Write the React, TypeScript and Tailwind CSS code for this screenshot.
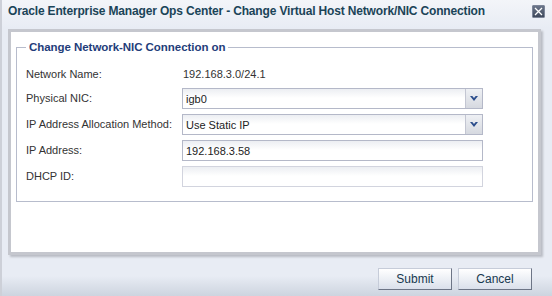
import React from "react";

const Chevron = () => (
  <svg width="8" height="5" viewBox="0 0 8 5">
    <path d="M0 0h2.3L4 2.1 5.7 0H8L4 5z" fill="#2b4d8c" />
  </svg>
);

function Select({ value }: { value: string }) {
  return (
    <div className="w-[301px] h-[21px] flex border border-[#b4b8c8] bg-[linear-gradient(to_bottom,#eceef2_0px,#ffffff_9px)]">
      <div className="flex-1 flex items-center pl-[3px] pt-[2px] text-[11px] text-[#222]">{value}</div>
      <div className="w-[17px] flex items-center justify-center border-l border-[#c3c6d2] bg-[linear-gradient(to_bottom,#eef0f4,#d6d9e0)]">
        <Chevron />
      </div>
    </div>
  );
}

function Input({ value, disabled }: { value?: string; disabled?: boolean }) {
  return (
    <div
      className={
        "w-[301px] h-[21px] flex items-center pl-[3px] pt-[2px] text-[11px] text-[#222] border bg-[linear-gradient(to_bottom,#eceef2_0px,#ffffff_9px)] " +
        (disabled ? "border-[#d2d4de]" : "border-[#b4b8c8]")
      }
    >
      {value}
    </div>
  );
}

function Row({ label, children, first }: { label: string; children: React.ReactNode; first?: boolean }) {
  return (
    <div className={"flex items-center h-[21px] " + (first ? "mb-[3px]" : "mb-[5px] last:mb-0")}>
      <div className="w-[156px] text-[11px] text-[#333]">{label}</div>
      {children}
    </div>
  );
}

function Button({ label }: { label: string }) {
  return (
    <button className="w-[74px] h-[22px] border border-t-[#c6ccd9] border-l-[#c6ccd9] border-b-[#6d7586] border-r-[#6d7586] bg-[linear-gradient(to_bottom,#ffffff,#dae0eb)] text-[12px] text-[#17384f] flex items-center justify-center">
      {label}
    </button>
  );
}

export default function App() {
  return (
    <div
      className="w-[552px] h-[296px] overflow-hidden flex flex-col border-l-2 border-[#cdd0d8] bg-[linear-gradient(to_bottom,#f3f5f9_0px,#e8ecf4_28px,#e8ecf4_276px,#cdd4df_296px)]"
      style={{ fontFamily: '"Liberation Sans", Arial, sans-serif' }}
    >
      <div className="h-[29px] shrink-0 flex items-start justify-between pl-[6px] pr-[7px] pt-[4px]">
        <span className="text-[12px] font-bold text-[#1b4458] leading-[15px] tracking-[-0.16px]">
          Oracle Enterprise Manager Ops Center - Change Virtual Host Network/NIC Connection
        </span>
        <div className="w-[13px] h-[13px] mt-[1px] flex items-center justify-center rounded-[1px] border border-[#7c8598] bg-[linear-gradient(to_bottom,#6a7589,#3f495c)]">
          <svg width="9" height="9" viewBox="0 0 9 9">
            <path d="M1 1l7 7M8 1L1 8" stroke="#fff" strokeWidth="1.3" />
          </svg>
        </div>
      </div>
      <div className="flex-1 flex flex-col pl-[6px] pr-[11px]">
        <div className="h-[226px] shrink-0 bg-white border-[3px] border-[#c5c7ce] shadow-[2px_2px_2px_#b9bcc4] px-[5px] pt-[7px]">
          <fieldset className="border border-[#b7bccc] pl-[9px] pr-[9px] pt-[9px] pb-[14px]">
            <legend className="px-[3px] text-[11.5px] font-bold text-[#1f3d7a] leading-[16px] tracking-[-0.05px]">
              Change Network-NIC Connection on
            </legend>
            <Row label="Network Name:" first>
              <span className="text-[11px] text-[#333] pl-[1px] -mt-[1px]">192.168.3.0/24.1</span>
            </Row>
            <Row label="Physical NIC:">
              <Select value="igb0" />
            </Row>
            <Row label="IP Address Allocation Method:">
              <Select value="Use Static IP" />
            </Row>
            <Row label="IP Address:">
              <Input value="192.168.3.58" />
            </Row>
            <Row label="DHCP ID:">
              <Input disabled />
            </Row>
          </fieldset>
        </div>
        <div className="flex justify-end gap-[6px] mt-[13px] mr-[9px]">
          <Button label="Submit" />
          <Button label="Cancel" />
        </div>
      </div>
    </div>
  );
}
